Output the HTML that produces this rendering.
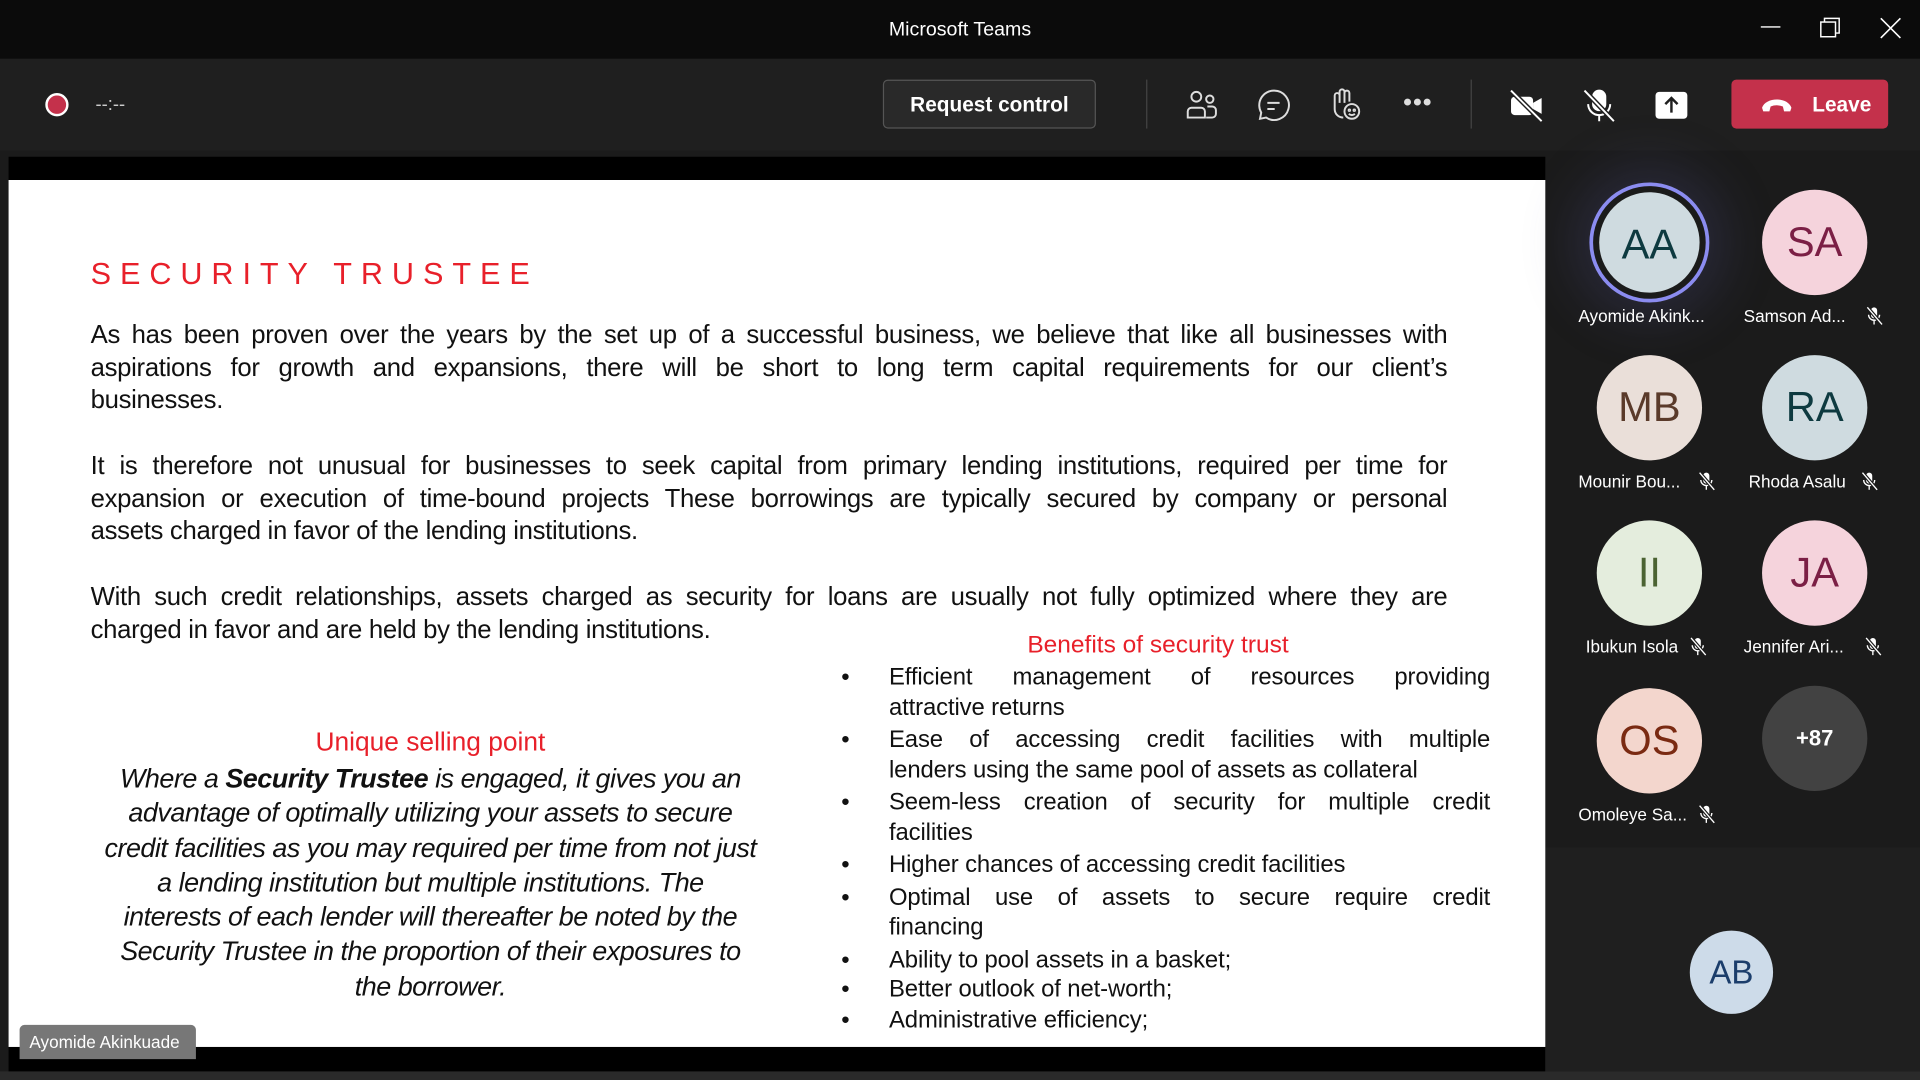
<!DOCTYPE html>
<html><head><meta charset="utf-8"><style>
*{margin:0;padding:0;box-sizing:border-box}
html,body{width:1920px;height:1080px;overflow:hidden;background:#1b1b1b}
#w{width:1568px;height:882px;transform:scale(1.22449);transform-origin:0 0;position:relative;font-family:"Liberation Sans",sans-serif;background:#1b1b1b}
.abs{position:absolute}
#title{left:0;top:0;width:1568px;height:48px;background:#0b0b0b;color:#fff;font-size:16px;text-align:center;line-height:50px}
#tool{left:0;top:48px;width:1568px;height:75px;background:#1f1f1f}
#slide{left:7px;top:147px;width:1255px;height:708px;background:#fff;color:#111}
.p{position:absolute;left:67px;width:1108px;font-size:21px;line-height:26.6px;letter-spacing:-0.25px}
.p div{text-align:justify;text-align-last:justify;white-space:nowrap;overflow:hidden}
.p div.l{text-align-last:left}
.red{color:#e8202a}
ul{list-style:none}
.b{position:absolute;left:680px;width:530px;font-size:19.5px;line-height:24.5px;letter-spacing:-0.1px}
.b li{position:relative;padding-left:39px}
.b li:before{content:"•";position:absolute;left:0}
.j{text-align:justify;text-align-last:justify;white-space:nowrap}
.av{position:absolute;width:86px;height:86px;border-radius:50%;text-align:center;line-height:86px;font-size:34px}
.nm{position:absolute;color:#fff;font-size:14px;white-space:nowrap}
.mic{display:inline-block;margin-left:8px;vertical-align:-3px}
</style></head><body><div id="w">
<div id="title" class="abs">Microsoft Teams
<svg class="abs" style="left:1437px;top:14px" width="18" height="18"><line x1="1" y1="8" x2="17" y2="8" stroke="#fff" stroke-width="1.2"/></svg>
<svg class="abs" style="left:1486px;top:14px" width="18" height="18"><rect x="1" y="4" width="12" height="12" fill="none" stroke="#fff" stroke-width="1.2"/><path d="M4 4V1h12v12h-3" fill="none" stroke="#fff" stroke-width="1.2"/></svg>
<svg class="abs" style="left:1535px;top:14px" width="18" height="18"><path d="M1 1L17 17M17 1L1 17" stroke="#fff" stroke-width="1.3"/></svg>
</div>
<div id="tool" class="abs">
<div class="abs" style="left:37px;top:28px;width:19px;height:19px;border-radius:50%;border:2.5px solid #fff;background:#c4314b"></div>
<div class="abs" style="left:78px;top:29px;color:#ccc;font-size:15px">--:--</div>
<div class="abs" style="left:721px;top:17px;width:174px;height:40px;border:1px solid #555;border-radius:4px;background:#292929;color:#fff;font-weight:bold;font-size:17px;text-align:center;line-height:40px">Request control</div>
<div class="abs" style="left:936px;top:17px;width:1px;height:40px;background:#444"></div>
<svg class="abs" style="left:967px;top:24px" width="28" height="28" fill="none" stroke="#ddd" stroke-width="1.6"><circle cx="10" cy="7" r="4"/><path d="M3 24v-5a3 3 0 0 1 3-3h8a3 3 0 0 1 3 3v5z"/><circle cx="21" cy="9" r="3"/><path d="M19 15h4a3 3 0 0 1 3 3v3a3 3 0 0 1-3 3h-5"/></svg>
<svg class="abs" style="left:1026px;top:24px" width="28" height="28" fill="none" stroke="#ddd" stroke-width="1.6"><path d="M14 2a12 12 0 1 1-6 22l-5 1 1-5A12 12 0 0 1 14 2z"/><path d="M9 12h10M9 17h6"/></svg>
<svg class="abs" style="left:1085px;top:23px" width="28" height="30" fill="none" stroke="#ddd" stroke-width="1.6"><path d="M5 18V7a2 2 0 0 1 4 0v6V4a2 2 0 0 1 4 0v9M13 5a2 2 0 0 1 4 0v7M5 18c0 4 3 7 7 7"/><circle cx="19" cy="20" r="6"/><circle cx="17" cy="19" r=".6"/><circle cx="21" cy="19" r=".6"/><path d="M16.5 22q2.5 2 5 0"/></svg>
<div class="abs" style="left:1146px;top:25px;color:#ddd;font-size:20px;letter-spacing:1px;font-weight:bold">•••</div>
<div class="abs" style="left:1201px;top:17px;width:1px;height:40px;background:#444"></div>
<svg class="abs" style="left:1233px;top:24px" width="28" height="28"><rect x="1" y="7" width="18" height="15" rx="3" fill="#fff"/><path d="M19 12l7-4v13l-7-4z" fill="#fff"/><line x1="1" y1="2" x2="26" y2="27" stroke="#1f1f1f" stroke-width="4"/><line x1="1" y1="2" x2="26" y2="27" stroke="#fff" stroke-width="1.6"/></svg>
<svg class="abs" style="left:1292px;top:24px" width="28" height="28" fill="none" stroke="#fff" stroke-width="1.6"><rect x="9" y="2" width="10" height="16" rx="5" fill="#fff"/><path d="M5 13a9 9 0 0 0 18 0M14 22v5"/><line x1="2" y1="2" x2="26" y2="27" stroke="#1f1f1f" stroke-width="4"/><line x1="2" y1="2" x2="26" y2="27"/></svg>
<svg class="abs" style="left:1351px;top:26px" width="28" height="24"><rect x="1" y="1" width="26" height="22" rx="3" fill="#fff"/><path d="M14 18V6M9 11l5-5 5 5" stroke="#1f1f1f" stroke-width="2" fill="none"/></svg>
<div class="abs" style="left:1414px;top:17px;width:128px;height:40px;border-radius:4px;background:#c4314b;color:#fff;font-weight:bold;font-size:17px;line-height:42px"><svg class="abs" style="left:24px;top:13px" width="26" height="14"><path d="M1 10C4 1 22 1 25 10l-1 3h-5l-1-4q-5-2-10 0l-1 4H2z" fill="#fff"/></svg><span style="position:absolute;left:66px">Leave</span></div>
</div>
<div class="abs" style="left:7px;top:128px;width:1255px;height:19px;background:#000"></div>
<div class="abs" style="left:7px;top:855px;width:1255px;height:20px;background:#000"></div>
<div class="abs" style="left:0;top:875px;width:1568px;height:7px;background:#2a2a2a"></div>
<div class="abs" style="left:1262px;top:692px;width:306px;height:183px;background:#1f1f1f"></div>
<div id="slide" class="abs">
<div class="abs red" style="left:67px;top:63px;font-size:25px;letter-spacing:7.3px">SECURITY TRUSTEE</div>
<div class="p" style="top:114px"><div>As has been proven over the years by the set up of a successful business, we believe that like all businesses with</div><div>aspirations for growth and expansions, there will be short to long term capital requirements for our client’s</div><div class="l">businesses.</div></div>
<div class="p" style="top:221px"><div>It is therefore not unusual for businesses to seek capital from primary lending institutions, required per time for</div><div>expansion or execution of time-bound projects These borrowings are typically secured by company or personal</div><div class="l">assets charged in favor of the lending institutions.</div></div>
<div class="p" style="top:328px"><div>With such credit relationships, assets charged as security for loans are usually not fully optimized where they are</div><div class="l">charged in favor and are held by the lending institutions.</div></div>
<div class="abs red" style="left:832px;top:369px;font-size:20px">Benefits of security trust</div>
<ul class="b" style="top:394px">
<li><div class="j">Efficient management of resources providing</div>attractive returns</li>
<li style="margin-top:2px"><div class="j">Ease of accessing credit facilities with multiple</div>lenders using the same pool of assets as collateral</li>
<li style="margin-top:2px"><div class="j">Seem-less creation of security for multiple credit</div>facilities</li>
<li style="margin-top:2px">Higher chances of accessing credit facilities</li>
<li style="margin-top:2px"><div class="j">Optimal use of assets to secure require credit</div>financing</li>
<li style="margin-top:2px">Ability to pool assets in a basket;</li>
<li>Better outlook of net-worth;</li>
<li>Administrative efficiency;</li>
</ul>
<div class="abs red" style="left:67px;top:447px;width:555px;text-align:center;font-size:21.5px">Unique selling point</div>
<div class="abs" style="left:47px;top:475px;width:595px;text-align:center;font-size:22px;font-style:italic;line-height:28.3px;letter-spacing:-0.4px">Where a <b>Security Trustee</b> is engaged, it gives you an<br>advantage of optimally utilizing your assets to secure<br>credit facilities as you may required per time from not just<br>a lending institution but multiple institutions. The<br>interests of each lender will thereafter be noted by the<br>Security Trustee in the proportion of their exposures to<br>the borrower.</div>
<div class="abs" style="left:9px;top:690px;width:144px;height:28px;background:#777;border-radius:4px 4px 0 0;color:#fff;font-size:14px;padding-left:8px;line-height:28px">Ayomide Akinkuade</div>
</div>
<div class="abs" style="left:1298px;top:149px;width:98px;height:98px;border-radius:50%;border:3px solid #8b8cf0;box-shadow:0 0 40px 15px rgba(80,80,140,.25)"></div>
<div class="av" style="left:1304px;top:155px;background:#cfdbe0;color:#0e3a40;border:2px solid #1b1b1b">AA</div>
<div class="av" style="left:1439px;top:155px;background:#f5d3dc;color:#7b1f45">SA</div>
<div class="av" style="left:1304px;top:290px;background:#eadfd9;color:#5a3a2a">MB</div>
<div class="av" style="left:1439px;top:290px;background:#cfdbe0;color:#0e3a40">RA</div>
<div class="av" style="left:1304px;top:425px;background:#e4eddd;color:#4b6332">II</div>
<div class="av" style="left:1439px;top:425px;background:#f5d3dc;color:#7b1f45">JA</div>
<div class="av" style="left:1304px;top:562px;background:#f3d6cd;color:#7a2a12">OS</div>
<div class="av" style="left:1439px;top:560px;background:#424242;color:#fff;font-size:18px;font-weight:bold">+87</div>
<div class="av" style="left:1380px;top:760px;width:68px;height:68px;line-height:68px;font-size:27px;background:#cddbe9;color:#1b3d6b">AB</div>
<svg width="0" height="0" style="position:absolute"><defs><g id="m"><rect x="5" y="1" width="5" height="9" rx="2.5" fill="#fff"/><path d="M3 7a4.5 4.5 0 0 0 9 0M7.5 12v3" stroke="#fff" fill="none" stroke-width="1.1"/><line x1="2" y1="1" x2="14" y2="15" stroke="#1b1b1b" stroke-width="3"/><line x1="2" y1="1" x2="14" y2="15" stroke="#fff" stroke-width="1.1"/></g></defs></svg>
<div class="nm" style="left:1289px;top:250px">Ayomide Akink...</div>
<div class="nm" style="left:1424px;top:250px">Samson Ad...<svg class="mic" width="16" height="16" style="margin-left:16px"><use href="#m"/></svg></div>
<div class="nm" style="left:1289px;top:385px">Mounir Bou...<svg class="mic" width="16" height="16" style="margin-left:14px"><use href="#m"/></svg></div>
<div class="nm" style="left:1428px;top:385px">Rhoda Asalu<svg class="mic" width="16" height="16" style="margin-left:12px"><use href="#m"/></svg></div>
<div class="nm" style="left:1295px;top:520px">Ibukun Isola<svg class="mic" width="16" height="16"><use href="#m"/></svg></div>
<div class="nm" style="left:1424px;top:520px">Jennifer Ari...<svg class="mic" width="16" height="16" style="margin-left:16px"><use href="#m"/></svg></div>
<div class="nm" style="left:1289px;top:657px">Omoleye Sa...<svg class="mic" width="16" height="16"><use href="#m"/></svg></div>
</div></body></html>
